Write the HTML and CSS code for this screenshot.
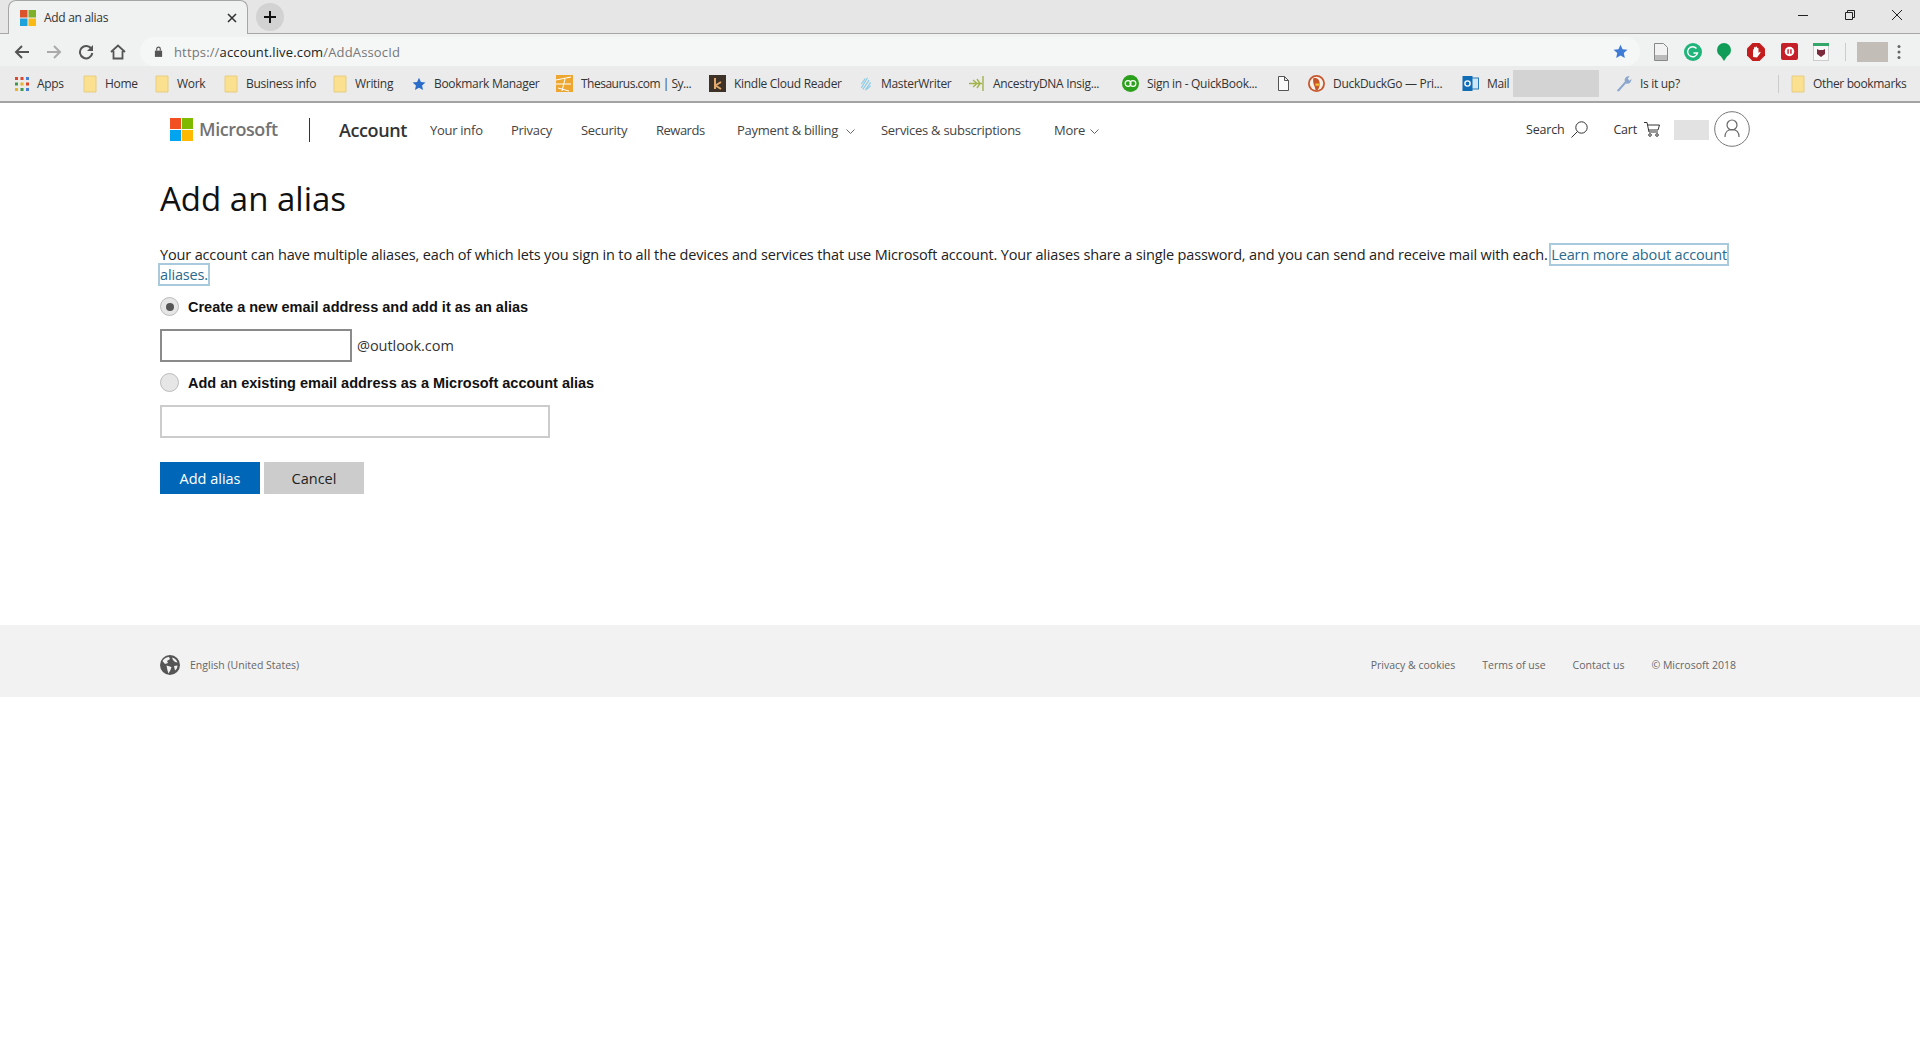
FILE: index.html
```html
<!DOCTYPE html>
<html lang="en">
<head>
<meta charset="utf-8">
<title>Add an alias</title>
<link rel="stylesheet" href="styles.css">
</head>
<body>
<header class="chrome">
  <div class="tabstrip">
    <div class="tab">
      <svg class="fav" viewBox="0 0 16 16"><rect width="7.5" height="7.5" fill="#d9532c"/><rect x="8.5" width="7.5" height="7.5" fill="#7fb02a"/><rect y="8.5" width="7.5" height="7.5" fill="#1ea2dc"/><rect x="8.5" y="8.5" width="7.5" height="7.5" fill="#f9b917"/></svg>
      <span class="tab-title">Add an alias</span>
      <svg class="tab-x" viewBox="0 0 10 10"><path d="M1 1l8 8M9 1l-8 8" stroke="#333" stroke-width="1.6"/></svg>
    </div>
    <div class="newtab"><svg viewBox="0 0 14 14"><path d="M7 1v12M1 7h12" stroke="#111" stroke-width="2"/></svg></div>
    <div class="winctl">
      <svg viewBox="0 0 12 12"><path d="M1 6.5h10" stroke="#222" stroke-width="1"/></svg>
      <svg viewBox="0 0 12 12"><path d="M1.500 3.500h7v7h-7zM3.500 3.500v-2h7v7h-2" fill="none" stroke="#222" stroke-width="1"/></svg>
      <svg viewBox="0 0 12 12"><path d="M1 1l10 10M11 1L1 11" stroke="#222" stroke-width="1"/></svg>
    </div>
  </div>
  <div class="toolbar">
    <div class="navbtns">
      <svg viewBox="0 0 16 16"><path d="M15 8H2M8 2L2 8l6 6" fill="none" stroke="#555" stroke-width="2"/></svg>
      <svg viewBox="0 0 16 16"><path d="M1 8h13M8 2l6 6-6 6" fill="none" stroke="#aaa" stroke-width="2"/></svg>
      <svg viewBox="0 0 16 16"><path d="M13.500 5A6.200 6.200 0 1 0 14.300 9" fill="none" stroke="#555" stroke-width="2"/><path d="M15 1v6H9z" fill="#555"/></svg>
      <svg viewBox="0 0 16 16"><path d="M1 8l7-6.500L15 8M3.500 7v7.500h9V7" fill="none" stroke="#555" stroke-width="1.800"/></svg>
    </div>
    <div class="omnibox">
      <svg class="lock" viewBox="0 0 10 12"><path d="M1 5h8v7H1z" fill="#555"/><path d="M3 5V3.200a2 2 0 0 1 4 0V5" fill="none" stroke="#555" stroke-width="1.300"/></svg>
      <span class="url"><span class="url-dim">https://</span>account.live.com<span class="url-dim">/AddAssocId</span></span>
      <svg class="omni-star" viewBox="0 0 16 16"><path d="M8 .8l2.200 4.800 5.200.6-3.900 3.500 1.100 5.200L8 12.300l-4.600 2.600 1.100-5.200L.6 6.200l5.200-.6z" fill="#3e7bd6"/></svg>
    </div>
    <div class="exts">
      <svg class="ext ext-doc" viewBox="0 0 14 18"><path d="M.5.5h9l4 4v13H.5z" fill="#f2f2f2" stroke="#888"/><rect x="1" y="12" width="12" height="5" fill="#bbb"/></svg>
      <svg class="ext ext-g" viewBox="0 0 18 18"><circle cx="9" cy="9" r="9" fill="#1fb47a"/><path d="M12.500 5.500A5 5 0 1 0 13.500 10H9.500" fill="none" stroke="#fff" stroke-width="1.400"/></svg>
      <svg class="ext ext-b" viewBox="0 0 14 18"><circle cx="7" cy="7" r="7" fill="#0f9d58"/><path d="M3 12l4 6 4-6z" fill="#0f9d58"/></svg>
      <svg class="ext ext-h" viewBox="0 0 18 18"><path d="M5.500 0h7L18 5.500v7L12.500 18h-7L0 12.500v-7z" fill="#c41d1d"/><path d="M6 14V7.500c0-2 1-1.500 1-.5V5c0-1.500 1.500-1.500 1.500 0V4.500c0-1.500 1.500-1.500 1.500 0V5.500c0-1 1.500-1 1.500.5V10l1-1c1-.500 1.300.5.800 1L10 14.500z" fill="#fff"/></svg>
      <svg class="ext ext-p" viewBox="0 0 18 18"><rect width="18" height="18" rx="2" fill="#c5202a"/><circle cx="9" cy="9" r="5" fill="#fff"/><path d="M7.500 6.500v5M10.500 6.500v5" stroke="#c5202a" stroke-width="1.500"/></svg>
      <svg class="ext ext-s" viewBox="0 0 16 18"><rect x=".5" y=".5" width="15" height="17" fill="#f8f8f8" stroke="#ccc"/><rect width="16" height="3" fill="#36a76b"/><path d="M4 6l2 1h4l2-1v5l-4 3-4-3z" fill="#7a2a3a"/></svg>
      <span class="ext-sep"></span>
      <span class="blur-avatar"></span>
      <svg class="kebab" viewBox="0 0 4 16"><circle cx="2" cy="2.500" r="1.500" fill="#666"/><circle cx="2" cy="8" r="1.500" fill="#666"/><circle cx="2" cy="13.500" r="1.500" fill="#666"/></svg>
    </div>
  </div>
  <div class="bookmarks">
    <a class="bm bm-apps"><svg class="bmi" viewBox="0 0 14 14"><g fill="#d9482b"><rect width="3" height="3"/><rect x="5.500" width="3" height="3"/></g><rect x="11" width="3" height="3" fill="#4a7fd6"/><rect y="5.500" width="3" height="3" fill="#3c9a4a"/><rect x="5.500" y="5.500" width="3" height="3" fill="#e4b42a"/><rect x="11" y="5.500" width="3" height="3" fill="#d9482b"/><rect y="11" width="3" height="3" fill="#e4b42a"/><rect x="5.500" y="11" width="3" height="3" fill="#3c9a4a"/><rect x="11" y="11" width="3" height="3" fill="#4a7fd6"/></svg>Apps</a>
    <a class="bm bm-home"><svg class="bmi folder" viewBox="0 0 14 18"><path d="M1 1h12v16H1z" fill="#fbe08f" stroke="#e6cd83"/></svg>Home</a>
    <a class="bm bm-work"><svg class="bmi folder" viewBox="0 0 14 18"><path d="M1 1h12v16H1z" fill="#fbe08f" stroke="#e6cd83"/></svg>Work</a>
    <a class="bm bm-biz"><svg class="bmi folder" viewBox="0 0 14 18"><path d="M1 1h12v16H1z" fill="#fbe08f" stroke="#e6cd83"/></svg>Business info</a>
    <a class="bm bm-writing"><svg class="bmi folder" viewBox="0 0 14 18"><path d="M1 1h12v16H1z" fill="#fbe08f" stroke="#e6cd83"/></svg>Writing</a>
    <a class="bm bm-mgr"><svg class="bmi" viewBox="0 0 16 16"><path d="M8 .8l2.200 4.800 5.200.6-3.900 3.500 1.100 5.200L8 12.300l-4.600 2.600 1.100-5.200L.6 6.200l5.200-.6z" fill="#2a6cc9"/></svg>Bookmark Manager</a>
    <a class="bm bm-thes"><svg class="bmi wide" viewBox="0 0 17 17"><rect width="17" height="17" fill="#eda62f"/><path d="M0 5l15-3M0 9l15 0M2 13l11 3M6 16l3-12" stroke="#fff" stroke-width="1"/></svg>Thesaurus.com | Sy...</a>
    <a class="bm bm-kindle"><svg class="bmi wide" viewBox="0 0 17 17"><rect width="17" height="17" fill="#3e3128"/><path d="M6 3v11M12 7L6.500 10.500 12 14" fill="none" stroke="#e2a76a" stroke-width="2"/></svg>Kindle Cloud Reader</a>
    <a class="bm bm-master"><svg class="bmi" viewBox="0 0 14 18"><path d="M1 14L9 1M3 16L11 4M6 17l7-10M1 9l5-7M8 16l5-5" stroke="#8ccbe6" stroke-width="1.500" fill="none"/></svg>MasterWriter</a>
    <a class="bm bm-ancestry"><svg class="bmi wide" viewBox="0 0 17 17"><path d="M15 1v15M14 8.500H1M5 5l4 3.500M5 12l4-3.500M9 4l3 4.500M9 13l3-4.500" stroke="#a3b34b" stroke-width="1.400" fill="none"/></svg>AncestryDNA Insig...</a>
    <a class="bm bm-qb"><svg class="bmi wide" viewBox="0 0 16 16"><circle cx="8" cy="8" r="8" fill="#2ca01c"/><circle cx="5.700" cy="8" r="2.700" fill="none" stroke="#fff" stroke-width="1.200"/><circle cx="10.300" cy="8" r="2.700" fill="none" stroke="#fff" stroke-width="1.200"/></svg>Sign in - QuickBook...</a>
    <a class="bm bm-doc"><svg class="bmi doc" viewBox="0 0 11 15"><path d="M.5.5h6l4 4v10H.5zM6.500.5v4h4" fill="#fbfbfb" stroke="#555"/></svg></a>
    <a class="bm bm-ddg"><svg class="bmi wide" viewBox="0 0 16 16"><circle cx="8" cy="8" r="8" fill="#c8562b"/><circle cx="8" cy="8" r="6.300" fill="#f4f0ea"/><path d="M5 3c4-1 6 2 6 5 0 3-1 5-2 6H7C7 11 4 8 5 3z" fill="#c8562b"/><path d="M7 8h4l-1 2H7z" fill="#f1c232"/></svg>DuckDuckGo — Pri...</a>
    <a class="bm bm-mail"><svg class="bmi wide" viewBox="0 0 16 17"><rect x="7" y="3" width="9" height="11" fill="#cfe6f7" stroke="#2a77b5"/><rect y="1" width="10" height="15" fill="#0f6cb5"/><circle cx="5" cy="8.500" r="2.600" fill="none" stroke="#fff" stroke-width="1.400"/></svg>Mail</a>
    <span class="bm-blur"></span>
    <a class="bm bm-isup"><svg class="bmi wide" viewBox="0 0 17 18"><path d="M2 16L10 7c-1-3 1-6 5-6l-2 3 2 2 2-2c0 4-3 6-6 5l-7 8c-1 1-3 0-2-1z" fill="#8ba6cf"/></svg>Is it up?</a>
    <span class="bm-sep"></span>
    <a class="bm bm-other"><svg class="bmi folder" viewBox="0 0 14 18"><path d="M1 1h12v16H1z" fill="#fbe08f" stroke="#e6cd83"/></svg>Other bookmarks</a>
  </div>
</header>

<nav class="sitenav">
  <svg class="mslogo" viewBox="0 0 23 23"><rect width="11" height="11" fill="#f25022"/><rect x="12" width="11" height="11" fill="#7fba00"/><rect y="12" width="11" height="11" fill="#00a4ef"/><rect x="12" y="12" width="11" height="11" fill="#ffb900"/></svg>
  <span class="msword">Microsoft</span>
  <span class="navdiv"></span>
  <span class="acct">Account</span>
  <a class="lnk lnk-info">Your info</a>
  <a class="lnk lnk-priv">Privacy</a>
  <a class="lnk lnk-sec">Security</a>
  <a class="lnk lnk-rew">Rewards</a>
  <a class="lnk lnk-pay">Payment &amp; billing<svg class="chev" viewBox="0 0 9 5"><path d="M.5.5l4 4 4-4" fill="none" stroke="#666"/></svg></a>
  <a class="lnk lnk-svc">Services &amp; subscriptions</a>
  <a class="lnk lnk-more">More<svg class="chev" viewBox="0 0 9 5"><path d="M.5.5l4 4 4-4" fill="none" stroke="#666"/></svg></a>
  <span class="navright">
    <a class="lnk-r">Search<svg class="r-search" viewBox="0 0 17 17"><circle cx="10.500" cy="6.500" r="5.700" fill="none" stroke="#333"/><path d="M6.500 10.500L.5 16.500" stroke="#333"/></svg></a>
    <a class="lnk-r">Cart<svg class="r-cart" viewBox="0 0 16 15"><path d="M0 .5h3l2 9.500h9M3.500 3h12l-1.500 5H4.500" fill="none" stroke="#333"/><circle cx="6" cy="13" r="1.300" fill="none" stroke="#333"/><circle cx="13" cy="13" r="1.300" fill="none" stroke="#333"/></svg></a>
    <span class="name-blur"></span>
    <svg class="avatar" viewBox="0 0 36 36"><circle cx="18" cy="18" r="17.300" fill="#fff" stroke="#777"/><circle cx="18" cy="14" r="5" fill="none" stroke="#666" stroke-width="1.200"/><path d="M11 26c0-5 3-7.500 7-7.500s7 2.500 7 7.500" fill="none" stroke="#666" stroke-width="1.200"/></svg>
  </span>
</nav>

<main class="content">
  <h1 class="title">Add an alias</h1>
  <p class="intro">Your account can have multiple aliases, each of which lets you sign in to all the devices and services that use Microsoft account. Your aliases share a single password, and you can send and receive mail with each. <a class="learn">Learn more about account</a> <a class="learn">aliases.</a></p>
  <div class="radio-row row-a"><span class="radio on"></span><label class="radio-label">Create a new email address and add it as an alias</label></div>
  <div class="input-row"><input class="field field-short" type="text"><span class="domain">@outlook.com</span></div>
  <div class="radio-row row-b"><span class="radio"></span><label class="radio-label">Add an existing email address as a Microsoft account alias</label></div>
  <div class="input-row"><input class="field field-long" type="text"></div>
  <div class="actions"><button class="btn primary">Add alias</button><button class="btn secondary">Cancel</button></div>
</main>

<footer class="foot">
  <svg class="globe" viewBox="0 0 20 20"><circle cx="10" cy="10" r="10" fill="#555"/><path d="M2.500 6C4 3.500 7 2 9 2l1 2-3 2 1 2-3 1zM12 2.500c3 .5 5 3 5.500 5L15 7l-2-2zM6.500 10.500l5 1.500-1 3-2 3.500-1-3zM14 11l3.500-.5c0 2-1 4-2.500 5z" fill="#f2f2f2"/></svg>
  <span class="lang">English (United States)</span>
  <span class="foot-links">
    <a>Privacy &amp; cookies</a>
    <a>Terms of use</a>
    <a>Contact us</a>
    <span>© Microsoft 2018</span>
  </span>
</footer>
</body>
</html>
```
FILE: styles.css
```css
* { box-sizing: border-box; }
html, body { margin: 0; padding: 0; background: #fff; }
body { font-family: "Open Sans", "Noto Sans", sans-serif; color: #222; height: 1050px; overflow: hidden; }
svg { display: block; flex: none; }
a { color: inherit; text-decoration: none; }

/* browser chrome */
.chrome { height: 103px; border-bottom: 2px solid #a3a3a3; background: #ebebeb; }
.tabstrip { height: 34px; background: #e6e6e6; border-bottom: 1px solid #a6a6a6; display: flex; align-items: flex-start; padding-left: 8px; }
.tab { width: 240px; height: 34px; background: #f0f1f1; border: 1px solid #a6a6a6; border-bottom: none; border-radius: 8px 8px 0 0; display: flex; align-items: center; padding: 0 10px 0 11px; }
.fav { width: 16px; height: 16px; }
.tab-title { font-size: 12px; margin-left: 8px; color: #333; flex: 1; letter-spacing: -.3px; }
.tab-x { width: 10px; height: 10px; }
.newtab { width: 28px; height: 28px; border-radius: 50%; background: #d2d2d2; margin: 3px 0 0 8px; display: flex; align-items: center; justify-content: center; }
.newtab svg { width: 14px; height: 14px; }
.winctl { margin-left: auto; display: flex; gap: 35px; padding: 9px 17px 0 0; }
.winctl svg { width: 12px; height: 12px; }

.toolbar { height: 32px; background: #f0f1f1; display: flex; align-items: center; padding: 3px 0 0 14px; }
.navbtns { display: flex; gap: 16px; width: 126px; }
.navbtns svg { width: 16px; height: 16px; }
.omnibox { width: 1500px; height: 29px; border-radius: 15px; background: #f5f6f6; display: flex; align-items: center; padding: 0 12px 0 14px; }
.lock { width: 9px; height: 11px; }
.url { font-size: 13px; margin-left: 11px; color: #222; flex: 1; letter-spacing: .15px; }
.url-dim { color: #777; }
.omni-star { width: 15px; height: 15px; }
.exts { display: flex; align-items: center; margin-left: 14px; }
.ext { margin-right: 16px; }
.ext-doc { width: 14px; height: 18px; margin-right: 16px; }
.ext-g { width: 18px; height: 18px; margin-right: 15px; }
.ext-b { width: 14px; height: 18px; }
.ext-h { width: 18px; height: 18px; }
.ext-p { width: 17px; height: 17px; margin-right: 15px; }
.ext-s { width: 16px; height: 18px; }
.ext-sep { width: 1px; height: 18px; background: #ccc; margin: 0 11px 0 0; }
.blur-avatar { width: 31px; height: 20px; background: #c3bdb8; }
.kebab { width: 4px; height: 16px; margin-left: 9px; }

.bookmarks { height: 35px; display: flex; align-items: center; padding-left: 15px; background: #ebebeb; font-size: 12px; color: #333; }
.bm { display: flex; align-items: center; gap: 8px; white-space: nowrap; letter-spacing: -.3px; }
.bmi { width: 14px; height: 14px; }
.folder { width: 14px; height: 18px; }
.wide { width: 17px; height: 17px; }
.doc { width: 11px; height: 15px; }
.bm-apps { width: 68px; }
.bm-home { width: 72px; }
.bm-work { width: 69px; }
.bm-biz { width: 109px; }
.bm-writing { width: 79px; }
.bm-mgr { width: 144px; }
.bm-thes { width: 153px; letter-spacing: -.5px; }
.bm-kindle { width: 150px; }
.bm-master { width: 109px; }
.bm-ancestry { width: 154px; }
.bm-qb { width: 156px; }
.bm-doc { width: 30px; }
.bm-ddg { width: 154px; }
.bm-mail { width: 51px; }
.bm-blur { width: 86px; height: 27px; background: #d3d3d3; margin-right: 16px; }
.bm-isup { width: 163px; }
.bm-sep { width: 1px; height: 18px; background: #ccc; margin-right: 12px; }
.bm-other { gap: 8px; letter-spacing: -.35px; }

/* site nav */
.sitenav { height: 53px; display: flex; align-items: center; padding-left: 170px; font-size: 13px; color: #444; }
.mslogo { width: 23px; height: 23px; margin-top: -1px; }
.msword { font-size: 18px; font-weight: 600; color: #737373; margin-left: 6px; letter-spacing: -.45px; width: 110px; margin-top: -2px; }
.navdiv { width: 1px; height: 24px; background: #333; margin-right: 29px; }
.acct { font-size: 18px; font-weight: 600; color: #333; width: 91px; letter-spacing: -.4px; }
.lnk { white-space: nowrap; display: flex; align-items: center; letter-spacing: -.28px; }
.lnk-info { width: 81px; }
.lnk-priv { width: 70px; }
.lnk-sec { width: 75px; }
.lnk-rew { width: 81px; letter-spacing: -.5px; }
.lnk-pay { width: 144px; }
.lnk-svc { width: 173px; }
.lnk-more { width: 44px; }
.lnk-more .chev { margin-left: 5px; }
.chev { width: 9px; height: 5px; margin: 3px 0 0 8px; }
.navright { margin-left: auto; display: flex; align-items: center; padding-right: 170px; }
.lnk-r { display: flex; align-items: center; gap: 7px; margin-right: 25px; color: #333; font-size: 12.5px; letter-spacing: -.2px; }
.r-search { width: 17px; height: 17px; }
.r-cart { width: 16px; height: 15px; }
.lnk-r + .lnk-r { margin-right: 14px; }
.name-blur { width: 35px; height: 20px; background: #e2e2e2; margin-right: 5px; }
.avatar { width: 36px; height: 36px; margin-top: -2px; }

/* main */
.content { padding: 20px 0 0 160px; height: 469px; }
.title { font-size: 33px; font-weight: 400; margin: 0; line-height: 45px; color: #111; }
.intro { width: 1580px; margin: 24px 0 0; font-size: 14.5px; line-height: 20px; letter-spacing: -.15px; color: #222; }
.learn { color: #2a6a8e; outline: 2px solid #a9c9dc; outline-offset: 0; }
.radio-row { display: flex; align-items: center; }
.row-a { margin-top: 12px; }
.row-b { margin-top: 11px; }
.radio { width: 19px; height: 19px; border-radius: 50%; background: #e6e6e6; border: 1px solid #bbb; display: flex; align-items: center; justify-content: center; }
.radio.on::after { content: ""; width: 8px; height: 8px; border-radius: 50%; background: #555; }
.radio-label { font-family: "Liberation Sans", sans-serif; font-size: 14.5px; font-weight: 700; margin-left: 9px; color: #111; }
.input-row { display: flex; align-items: center; margin-top: 13px; }
.field { height: 33px; background: #fff; margin: 0; padding: 0; border-radius: 0; outline: none; }
.field-short { width: 192px; border: 2px solid #8a8a8a; }
.field-long { width: 390px; border: 2px solid #ccc; }
.domain { font-size: 14.5px; margin-left: 5px; color: #333; letter-spacing: -.05px; }
.actions { display: flex; gap: 4px; margin-top: 24px; }
.btn { width: 100px; height: 32px; border: none; font-family: inherit; font-size: 14.5px; padding: 0; }
.primary { background: #0067b8; color: #fff; }
.secondary { background: #ccc; color: #222; }

/* footer */
.foot { height: 72px; background: #f2f2f2; display: flex; align-items: center; padding: 8px 184px 0 160px; font-size: 10.5px; color: #666; }
.globe { width: 20px; height: 20px; }
.lang { margin-left: 10px; }
.foot-links { margin-left: auto; display: flex; gap: 27px; }
```
